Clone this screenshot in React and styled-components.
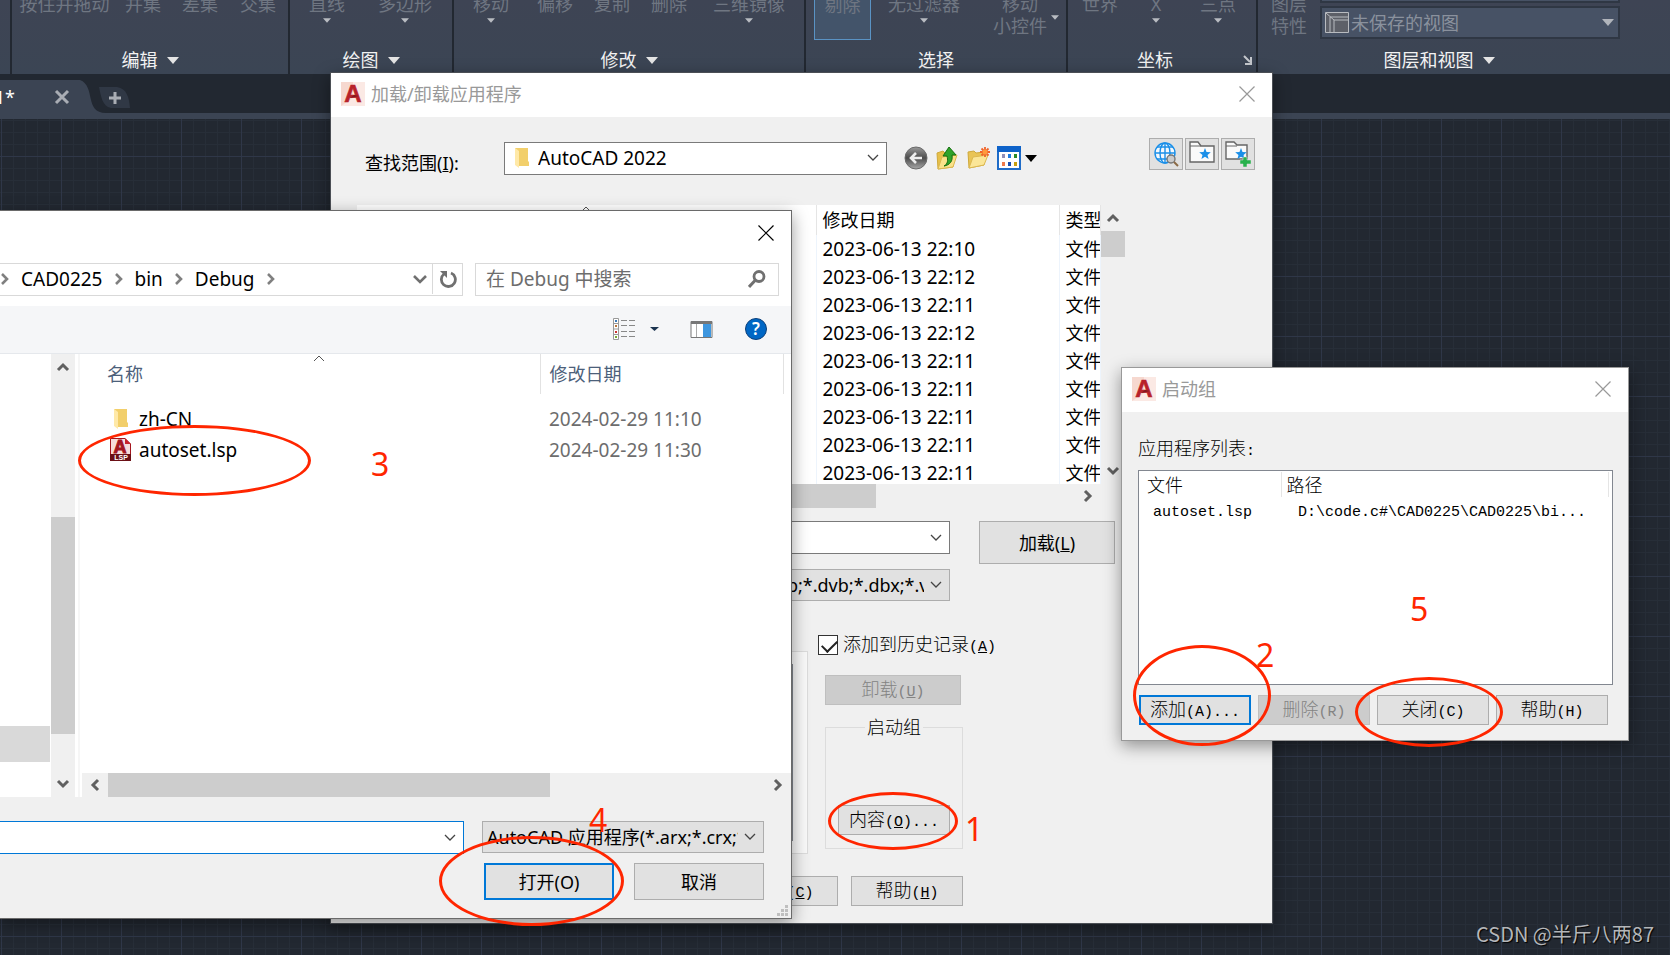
import React from 'react'
import styled, { createGlobalStyle, css } from 'styled-components'

const GlobalStyle = createGlobalStyle`
                  * {
                    box-sizing: border-box;
                  }

                  body {
                    margin: 0;
                    background: #222831;
                    overflow: hidden;
                  }

                  body, button, input, select {
                    font-family: "Noto Sans", "Noto Sans CJK SC", sans-serif;
                    font-size: 18px;
                    line-height: 24px;
                  }

                  button, select, input {
                    margin: 0;
                    padding: 0;
                    border-radius: 0;
                    color: inherit;
                  }

                  svg {
                    display: block;
                    flex: none;
                  }
                  `

const Desktop = styled.div`
                  position: relative;
                  min-height: 100vh;
                  display: flex;
                  flex-direction: column;
                  overflow: hidden;
                  `

/* ribbon */
const Ribbon = styled.header`
                  display: flex;
                  height: 74px;
                  padding-left: 10px;
                  align-items: flex-end;
                  background: linear-gradient(#3e4454, #3b4554);
                  overflow: hidden;
                  `

const Panel = styled.section`
                  flex: none;
                  width: ${p => p.$width}px;
                  height: 81px;
                  border-left: 2px solid #222831;
                  `

const Tools = styled.div`
                  display: grid;
                  grid-template-columns: ${p => p.$cols};
                  height: 54px;
                  color: #6f7682;
                  `

const Tool = styled.button`
                  display: flex;
                  flex-direction: column;
                  align-items: center;
                  height: 47px;
                  border: 0;
                  background: none;
                  line-height: 22px;
                  white-space: nowrap;

                  & svg {
                    margin-top: 3px;
                  }

                  ${p => p.$side && css`
                    flex-direction: row;
                    align-items: flex-start;
                    justify-content: flex-end;
                    gap: 4px;
                    padding-right: 8px;

                    & svg {
                      margin-top: 22px;
                    }
                  `}

                  ${p => p.$active && css`
                    width: 57px;
                    justify-self: center;
                    border: 1px solid #5a93c4;
                    background: #43546a;
                  `}
                  `

const PanelTitle = styled.div`
                  display: flex;
                  align-items: center;
                  height: 26px;
                  color: #f2f2f2;

                  & span {
                    display: flex;
                    flex: 1;
                    align-items: center;
                    justify-content: center;
                    gap: 9px;
                  }
                  `

const LayerFields = styled.div`
                  display: flex;
                  flex-direction: column;
                  gap: 3px;
                  `

const LayerBox = styled.div`
                  display: flex;
                  align-items: center;
                  gap: 2px;
                  height: ${p => p.$height}px;
                  padding: 0 4px 0 3px;
                  border: 2px solid #2f3744;
                  background: #475265;
                  color: #8a919d;

                  & select {
                    flex: 1;
                    appearance: none;
                    border: 0;
                    background: none;
                  }
                  `

/* drawing tabs */
const TabBar = styled.nav`
                  display: flex;
                  align-items: flex-end;
                  height: 45px;
                  border-bottom: 6px solid #3b4453;
                  background: #222831;
                  `

const FileTab = styled.div`
                  display: flex;
                  align-items: center;
                  width: 80px;
                  height: 33px;
                  background: #3b4453;
                  color: #fff;

                  & span {
                    display: flex;
                    justify-content: flex-end;
                    width: 15px;
                    margin-right: 39px;
                  }
                  `

const PlainButton = styled.button`
                  display: flex;
                  align-items: center;
                  justify-content: center;
                  border: 0;
                  background: none;
                  `

const Canvas = styled.main`
                  flex: 1;
                  background-color: #222831;
                  background-image:
                    linear-gradient(90deg, #2f3748 1px, transparent 1px),
                    linear-gradient(#2f3748 1px, transparent 1px),
                    linear-gradient(90deg, #272e38 1px, transparent 1px),
                    linear-gradient(#272e38 1px, transparent 1px);
                  background-size: 60px 60px, 60px 60px, 12px 12px, 12px 12px;
                  background-position: 1px 37px;
                  `

/* windows */
const Win = styled.section`
                  position: absolute;
                  left: ${p => p.$left}px;
                  top: ${p => p.$top}px;
                  width: ${p => p.$width}px;
                  display: flex;
                  flex-direction: column;
                  border: 1px solid ${p => p.$edge};
                  background: #f0f0f0;
                  color: #000;
                  box-shadow: 0 5px 16px rgba(0, 0, 0, .4);
                  `

const TitleBar = styled.div`
                  display: flex;
                  align-items: center;
                  gap: 6px;
                  height: 44px;
                  padding: 0 17px 2px 10px;
                  background: #fff;
                  color: #999;

                  & button {
                    margin-left: auto;
                  }
                  `

const PushButton = styled.button`
                  width: ${p => p.$width || 112}px;
                  height: ${p => p.$height || 30}px;
                  border: 1px solid #adadad;
                  background: #e1e1e1;
                  white-space: nowrap;

                  ${p => p.$primary && css`
                    border: 2px solid #0078d7;
                  `}

                  &:disabled {
                    border-color: #bfbfbf;
                    background: #ccc;
                    color: #838383;
                  }
                  `

const Song = styled.span`
                  font-family: "Noto Sans CJK SC", sans-serif;
                  font-weight: 300;
                  line-height: 20px;
                  `

const Mono = styled.span`
                  font-family: "Liberation Mono", monospace;
                  font-size: 15px;
                  line-height: 20px;
                  `

const Combo = styled.div`
                  display: flex;
                  align-items: center;
                  gap: 6px;
                  width: ${p => p.$width}px;
                  height: ${p => p.$height || 33}px;
                  padding: 0 7px 0 ${p => p.$pad || 4}px;
                  border: 1px solid ${p => p.$edge || '#7a7a7a'};
                  background: ${p => p.$grey ? '#e1e1e1' : '#fff'};

                  & select, & input {
                    flex: 1;
                    min-width: 0;
                    height: 100%;
                    appearance: none;
                    border: 0;
                    outline: 0;
                    background: none;
                    font-size: ${p => p.$grey ? 18 : 19}px;
                  }
                  `

/* scroll bars */
const Bar = styled.div`
                  display: flex;
                  flex: none;
                  flex-direction: ${p => p.$row ? 'row' : 'column'};
                  ${p => p.$row ? 'height: 24px;' : 'width: 24px;'}
                  background: #f0f0f0;

                  & button {
                    flex: 0 0 26px;
                  }

                  & div {
                    flex: 1;
                  }
                  `

const Thumb = styled.i`
                  flex: none;
                  background: #cdcdcd;
                  ${p => p.$row
                    ? css`width: ${p.$size}px; margin-left: ${p.$start}px;`
                    : css`height: ${p.$size}px; margin-top: ${p.$start}px;`}
                  `

/* load dialog */
const LookRow = styled.div`
                  display: flex;
                  align-items: center;
                  height: 40px;
                  margin: 21px 17px 27px 34px;

                  & label {
                    align-self: flex-end;
                    width: 139px;
                    line-height: 30px;
                  }
                  `

const IconRow = styled.div`
                  display: flex;
                  align-items: center;
                  gap: 7px;
                  margin-left: 17px;

                  & svg:last-child {
                    margin-left: -3px;
                  }
                  `

const SquareButtons = styled.div`
                  display: flex;
                  align-self: flex-start;
                  gap: 2px;
                  margin-left: auto;

                  & button {
                    display: flex;
                    align-items: center;
                    justify-content: center;
                    width: 34px;
                    height: 32px;
                    border: 1px solid #adadad;
                    background: #e1e1e1;
                  }
                  `

const ListArea = styled.div`
                  display: grid;
                  grid-template-columns: 744px 24px;
                  margin-left: 26px;
                  `

const ListView = styled.div`
                  height: 279px;
                  background: #fff;
                  overflow: hidden;
                  `

const FileTable = styled.table`
                  width: 100%;
                  table-layout: fixed;
                  border-collapse: collapse;

                  & th, & td {
                    height: 28px;
                    padding: 0 0 0 6px;
                    border-right: 1px solid #edf4fc;
                    text-align: left;
                    font-weight: 400;
                    white-space: nowrap;
                    overflow: hidden;
                  }

                  & td {
                    font-size: 19px;
                  }

                  & th {
                    position: relative;
                    height: 30px;
                    border-color: #e5e5e5;
                  }

                  & td:last-child {
                    font-size: 18px;
                  }
                  `

const SortMark = styled.svg`
                  position: absolute;
                  top: 1px;
                  left: 50%;
                  margin-left: -6px;
                  `

const LoadForm = styled.div`
                  display: grid;
                  grid-template-columns: 446px 136px;
                  column-gap: 29px;
                  margin: 13px 0 34px 173px;

                  & > div {
                    display: flex;
                    flex-direction: column;
                    gap: 15px;
                  }
                  `

const Lower = styled.div`
                  display: flex;
                  gap: 10px;
                  margin-left: 26px;
                  `

const HistoryTab = styled.div`
                  width: 451px;
                  height: 203px;
                  margin-top: 16px;
                  padding: 12px 14px;
                  border: 1px solid #dcdcdc;
                  background: #f9f9f9;

                  & div {
                    height: 100%;
                    border: 1px solid #828790;
                    background: #fff;
                  }
                  `

const SideColumn = styled.div`
                  display: flex;
                  flex-direction: column;
                  align-items: flex-start;
                  padding-left: 7px;

                  & label {
                    display: flex;
                    align-items: center;
                    gap: 5px;
                    height: 20px;
                    margin: 0 0 20px -7px;
                  }
                  `

const Check = styled.input`
                  appearance: none;
                  width: 20px;
                  height: 20px;
                  border: 1px solid #333;
                  background: #fff;

                  &:checked::after {
                    content: '';
                    display: block;
                    width: 13px;
                    height: 7px;
                    margin: 4px 0 0 3px;
                    border: solid #222;
                    border-width: 0 0 2px 2px;
                    transform: rotate(-45deg);
                  }
                  `

const Group = styled.fieldset`
                  width: 137px;
                  height: 135px;
                  margin: 9px 0 0;
                  padding: 65px 12px 0;
                  border: 1px solid #dcdcdc;

                  & legend {
                    margin: 0 auto;
                    padding: 0 2px;
                    line-height: 26px;
                  }
                  `

const DialogButtons = styled.div`
                  display: flex;
                  gap: 13px;
                  margin: 22px 0 17px 395px;
                  `

/* open dialog */
const OpenTop = styled.div`
                  display: flex;
                  align-items: center;
                  justify-content: flex-end;
                  height: 52px;
                  padding: 0 17px 9px 0;
                  background: #fff;
                  `

const AddressRow = styled.div`
                  display: flex;
                  gap: 12px;
                  padding: 0 12px 10px 0;
                  background: #fff;
                  font-size: 19px;
                  `

const Address = styled.nav`
                  display: flex;
                  align-items: center;
                  gap: 12px;
                  flex: 1;
                  height: 33px;
                  padding: 0 0 1px 1px;
                  border: 1px solid #d9d9d9;
                  border-left: 0;

                  & a {
                    color: #000;
                    text-decoration: none;
                  }

                  & button {
                    align-self: stretch;
                    width: 30px;
                    border-left: 1px solid #d9d9d9;
                  }

                  & button:nth-last-child(2) {
                    border: 0;
                    margin: 0 -15px 0 auto;
                  }
                  `

const Search = styled.label`
                  display: flex;
                  align-items: center;
                  width: 304px;
                  height: 33px;
                  padding: 0 12px 1px 10px;
                  border: 1px solid #d9d9d9;

                  & input {
                    flex: 1;
                    min-width: 0;
                    border: 0;
                    outline: 0;
                    font-size: 19px;
                  }

                  & input::placeholder {
                    color: #6d6d6d;
                    opacity: 1;
                  }
                  `

const OpenToolbar = styled.div`
                  display: flex;
                  align-items: center;
                  justify-content: flex-end;
                  height: 48px;
                  padding: 0 24px 2px 0;
                  border-bottom: 1px solid #e5e8ec;
                  background: #f5f6f8;
                  `

const OpenBody = styled.div`
                  display: flex;
                  height: 443px;
                  background: #fff;
                  `

const NavPane = styled.div`
                  display: flex;
                  flex-direction: column;
                  justify-content: flex-end;
                  width: 51px;
                  padding: 0 1px 35px 0;

                  & i {
                    height: 36px;
                    background: #d9d9d9;
                  }
                  `

const Split = styled.div`
                  width: 7px;
                  border: solid #fff;
                  border-width: 0 2px 0 3px;
                  background: #f6f6f6;
                  `

const OpenList = styled.div`
                  flex: 1;
                  display: flex;
                  flex-direction: column;
                  justify-content: space-between;
                  `

const OpenTable = styled.table`
                  table-layout: fixed;
                  width: 685px;
                  margin-left: 16px;
                  border-collapse: collapse;

                  & th {
                    position: relative;
                    height: 40px;
                    padding: 0 0 0 9px;
                    border-right: 1px solid #e2e2e2;
                    color: #4c607a;
                    font-weight: 400;
                    text-align: left;
                  }

                  & tbody::before {
                    content: '';
                    display: block;
                    height: 9px;
                  }

                  & td {
                    height: 31px;
                    padding: 0 0 0 9px;
                    color: #6d6d6d;
                    font-size: 19px;
                  }

                  & td:first-child {
                    padding-left: 12px;
                    color: #000;
                  }
                  `

const FileName = styled.div`
                  display: flex;
                  align-items: center;
                  gap: 8px;
                  `

const OpenFooter = styled.div`
                  display: grid;
                  grid-template-columns: 465px 282px;
                  gap: 9px 18px;
                  margin-left: -1px;
                  padding: 24px 0 18px;
                  `

const FooterButtons = styled.div`
                  grid-column: 2;
                  display: flex;
                  justify-content: flex-end;
                  gap: 20px;
                  `

const Grip = styled.svg`
                  position: absolute;
                  right: 3px;
                  bottom: 2px;
                  `

/* startup dialog */
const StartupBody = styled.div`
                  display: flex;
                  flex-direction: column;
                  padding: 25px 15px 15px 16px;
                  line-height: 20px;
                  `

const AppList = styled.div`
                  height: 215px;
                  margin-top: 8px;
                  padding: 1px 3px;
                  border: 1px solid #828790;
                  background: #fff;

                  & table {
                    width: 100%;
                    table-layout: fixed;
                    border-collapse: collapse;
                  }

                  & th {
                    height: 25px;
                    padding: 0 0 0 5px;
                    border-right: 1px solid #e5e5e5;
                    text-align: left;
                    font-weight: 300;
                  }

                  & td {
                    height: 27px;
                    padding: 0 0 0 11px;
                    white-space: nowrap;
                  }

                  & td + td {
                    padding-left: 17px;
                  }
                  `

const StartupButtons = styled.div`
                  display: flex;
                  justify-content: space-between;
                  margin-top: 10px;
                  padding: 0 5px 0 1px;
                  `

/* red notes */
const Ring = styled.div`
                  position: absolute;
                  left: ${p => p.$x}px;
                  top: ${p => p.$y}px;
                  width: ${p => p.$w}px;
                  height: ${p => p.$h}px;
                  border: 3px solid #ff2600;
                  border-radius: 50%;
                  pointer-events: none;
                  `

const Digit = styled.div`
                  position: absolute;
                  left: ${p => p.$x}px;
                  top: ${p => p.$y}px;
                  color: #ff2600;
                  font-size: 32px;
                  line-height: 38px;
                  `

const Watermark = styled.div`
                  position: absolute;
                  right: 16px;
                  bottom: 8px;
                  color: #b4b6b9;
                  font-family: "Noto Sans CJK SC", sans-serif;
                  font-size: 20px;
                  line-height: 26px;
                  text-shadow: 1px 1px 1px #000;
                  `

const Down = ({ size = 8, color = '#b9bcc2' }) => (
  <svg width={size} height={size / 2 + 1} viewBox="0 0 12 7"><path d="M0 0h12L6 7z" fill={color} /></svg>
)

const turns = { up: 0, right: 90, down: 180, left: 270 }

const Arrow = ({ dir }) => (
  <svg width="14" height="14" viewBox="0 0 14 14">
    <path d="M2 10l5-5 5 5" fill="none" stroke="#606060" strokeWidth="3" transform={`rotate(${turns[dir]} 7 7)`} />
  </svg>
)

const Chevron = () => (
  <svg width="12" height="8" viewBox="0 0 12 8"><path d="M1 1l5 5 5-5" fill="none" stroke="#444" strokeWidth="1.3" /></svg>
)

const Crumb = () => (
  <svg width="8" height="12" viewBox="0 0 8 12"><path d="M1 1l5 5-5 5" fill="none" stroke="#808080" strokeWidth="2.6" /></svg>
)

const Cross = ({ color = '#999' }) => (
  <svg width="16" height="16" viewBox="0 0 16 16"><path d="M.5.5l15 15M15.5.5l-15 15" stroke={color} strokeWidth="1.2" /></svg>
)

const AcadLogo = () => (
  <svg width="24" height="24" viewBox="0 0 24 24">
    <rect width="24" height="24" fill="#fbe9e4" />
    <path d="M0 0h12v16L0 24z" fill="#f6d8cf" />
    <text x="12" y="20" textAnchor="middle" fontFamily="Liberation Sans" fontWeight="700" fontSize="24" fill="#b8222a" stroke="#b8222a" strokeWidth=".6">A</text>
    <path d="M5 19l8-6 5 1-9 2z" fill="#7f1a1f" />
  </svg>
)

const Folder = () => (
  <svg width="21" height="22" viewBox="0 0 21 22">
    <path d="M4 1h13v13l1 1v4H8z" fill="#f2cf6b" />
    <path d="M4 1l4 3v17l-4-3z" fill="#ffe9a8" />
  </svg>
)

const LspIcon = () => (
  <svg width="21" height="23" viewBox="0 0 21 23">
    <path d="M.5.5H15l5.500 5.500V22.500H.5z" fill="#f6dcda" stroke="#a3161f" />
    <path d="M15 0v6h6z" fill="#c8222c" />
    <text x="10" y="15" textAnchor="middle" fontFamily="Liberation Sans" fontWeight="700" fontSize="18" fill="#a3161f" stroke="#a3161f">A</text>
    <path d="M0 16h21v7H0z" fill="#6b1016" />
    <text x="11" y="22" textAnchor="middle" fontFamily="Liberation Sans" fontWeight="700" fontSize="7" fill="#fff">LSP</text>
  </svg>
)

const BackIcon = () => (
  <svg width="24" height="24" viewBox="0 0 24 24">
    <defs>
      <linearGradient id="ball" x1="0" y1="0" x2="0" y2="1">
        <stop offset="0" stopColor="#9a9a9a" /><stop offset=".5" stopColor="#4c4c4c" /><stop offset="1" stopColor="#a8a8a8" />
      </linearGradient>
    </defs>
    <circle cx="12" cy="12" r="11" fill="url(#ball)" stroke="#6a6a6a" />
    <path d="M18 12H7M12 7l-5 5 5 5" fill="none" stroke="#eee" strokeWidth="2.600" />
  </svg>
)

const UpIcon = () => (
  <svg width="24" height="24" viewBox="0 0 24 24">
    <path d="M2 7l6-2 2 2 8-1v15L3 23z" fill="#e7c04a" stroke="#cfa93c" />
    <path d="M3 23l4-12 15-2-4 12z" fill="#fae28a" stroke="#dcb850" />
    <path d="M9 20c4-2 4-6 3-10H8l6-9 7 8h-4c1 6-2 10-8 11z" fill="#2fa32b" stroke="#16700f" />
  </svg>
)

const NewFolderIcon = () => (
  <svg width="24" height="24" viewBox="0 0 24 24">
    <path d="M2 6l6-1 2 2 8-1v13L3 22z" fill="#e9c455" stroke="#cfa93c" />
    <path d="M3 22l4-11 15-2-4 10z" fill="#fbe697" stroke="#dcb850" />
    <path d="M19 1v10M14 6h10M15.500 2.500l7 7M22.500 2.500l-7 7" stroke="#f0622a" strokeWidth="1.800" />
    <circle cx="19" cy="6" r="2.500" fill="#ff9a3c" />
  </svg>
)

const ViewsIcon = () => (
  <svg width="24" height="24" viewBox="0 0 24 24">
    <rect x="1" y="1" width="22" height="22" fill="#fff" stroke="#1f6cc8" strokeWidth="2" />
    <path d="M0 0h24v6H0z" fill="#0d62c9" />
    <path d="M5 8h3v4H5z" fill="#8f8fb8" /><path d="M11 8h3v4h-3z" fill="#1f7be0" /><path d="M17 8h3v4h-3z" fill="#2a8a2a" />
    <path d="M5 16h3v4H5z" fill="#ee7a4a" /><path d="M11 16h3v4h-3z" fill="#1a4fb0" /><path d="M17 16h3v4h-3z" fill="#c8a010" />
  </svg>
)

const GlobeIcon = () => (
  <svg width="25" height="25" viewBox="0 0 25 25" fill="none" stroke="#1a8fe8" strokeWidth="1.400">
    <circle cx="11" cy="11" r="10" fill="#f4f8fc" /><ellipse cx="11" cy="11" rx="5" ry="10" />
    <path d="M11 1v20M1 11h20M3 5h16M3 17h16" />
    <circle cx="17" cy="17" r="4" fill="#ccc" stroke="#777" /><path d="M20 20l4 4" stroke="#8b6a45" strokeWidth="2" />
  </svg>
)

const StarFolder = ({ plus }) => (
  <svg width="26" height="26" viewBox="0 0 26 26">
    <path d={plus ? 'M1 5V1h8l3 3h10v14H1z' : 'M1 5V1h8l3 4h13v16H1z'} fill="#fafafa" stroke="#666" strokeWidth="1.400" />
    <path d="M1 5h11" stroke="#666" />
    <path d="M16 7l1.500 4 4.300.2-3.300 2.700 1.100 4.200L16 15.700l-3.600 2.400 1.100-4.200-3.300-2.700 4.300-.2z" fill="#1a8fe8" />
    {plus && <path d="M18 16h4v3h4v4h-4v3h-4v-3h-3v-4h3z" fill="#28b14c" stroke="#e1e1e1" strokeWidth=".5" />}
  </svg>
)

const ScrollBar = ({ row, start, size }) => (
  <Bar $row={row}>
    <PlainButton aria-label="-"><Arrow dir={row ? 'left' : 'up'} /></PlainButton>
    <Thumb $row={row} $start={start} $size={size} />
    <div />
    <PlainButton aria-label="+"><Arrow dir={row ? 'right' : 'down'} /></PlainButton>
  </Bar>
)

const panels = [
  { title: '编辑', width: 278, more: true, cols: '105px 52px 62px 54px', tools: [['按住并拖动'], ['并集'], ['差集'], ['交集']] },
  { title: '绘图', width: 164, more: true, cols: '74px 82px', tools: [['直线', 1], ['多边形', 1]] },
  { title: '修改', width: 352, more: true, cols: '74px 54px 60px 54px 106px', tools: [['移动', 1], ['偏移'], ['复制'], ['删除'], ['三维镜像', 1]] },
]

const dates = ['22:10', '22:12', '22:11', '22:12', '22:11', '22:11', '22:11', '22:11', '22:11']

const RibbonBar = () => (
  <Ribbon>
    {panels.map(p => (
      <Panel key={p.title} $width={p.width}>
        <Tools $cols={p.cols}>
          {p.tools.map(([name, menu]) => <Tool key={name}>{name}{menu && <Down />}</Tool>)}
        </Tools>
        <PanelTitle><span>{p.title}<Down size={12} color="#e4e4e4" /></span></PanelTitle>
      </Panel>
    ))}
    <Panel $width={262}>
      <Tools $cols="73px 90px 98px">
        <Tool $active>剔除</Tool>
        <Tool>无过滤器<Down /></Tool>
        <Tool $side><span>移动<br />小控件</span><Down /></Tool>
      </Tools>
      <PanelTitle><span>选择</span></PanelTitle>
    </Panel>
    <Panel $width={190}>
      <Tools $cols="64px 48px 76px">
        <Tool>世界</Tool>
        <Tool>X<Down /></Tool>
        <Tool>三点<Down /></Tool>
      </Tools>
      <PanelTitle>
        <span>坐标</span>
        <svg width="14" height="10" viewBox="0 0 14 10"><path d="M2 1l6 6M9 2v7H3" fill="none" stroke="#c4c7cc" strokeWidth="2" /></svg>
      </PanelTitle>
    </Panel>
    <Panel $width={364}>
      <Tools $cols="62px 300px">
        <Tool><span>图层<br />特性</span></Tool>
        <LayerFields>
          <LayerBox $height={10} />
          <LayerBox $height={33}>
            <svg width="24" height="21" viewBox="0 0 24 21">
              <path d="M.5.5h23v20H.5z" fill="#5d6068" stroke="#b8bbc0" />
              <path d="M1 1l8 7h15M9 8v13M5 5h19M5 5v16" fill="none" stroke="#b8bbc0" />
            </svg>
            <select aria-label="视图"><option>未保存的视图</option></select>
            <Down size={12} color="#b0b4bb" />
          </LayerBox>
        </LayerFields>
      </Tools>
      <PanelTitle><span>图层和视图<Down size={12} color="#e4e4e4" /></span></PanelTitle>
    </Panel>
  </Ribbon>
)

const LoadDialog = () => (
  <Win $left={330} $top={72} $width={943} $edge="#4b4f55">
    <TitleBar>
      <AcadLogo />加载/卸载应用程序
      <PlainButton aria-label="关闭"><Cross /></PlainButton>
    </TitleBar>
    <LookRow>
      <label htmlFor="look">查找范围(<u>I</u>):</label>
      <Combo $width={383} $pad={6}>
        <Folder />
        <select id="look"><option>AutoCAD 2022</option></select>
        <Chevron />
      </Combo>
      <IconRow>
        <BackIcon /><UpIcon /><NewFolderIcon /><ViewsIcon />
        <Down size={12} color="#000" />
      </IconRow>
      <SquareButtons>
        <button aria-label="搜索"><GlobeIcon /></button>
        <button aria-label="收藏"><StarFolder /></button>
        <button aria-label="添加"><StarFolder plus /></button>
      </SquareButtons>
    </LookRow>
    <ListArea>
      <ListView>
        <FileTable>
          <colgroup><col width="459" /><col width="243" /><col /></colgroup>
          <thead>
            <tr>
              <th><SortMark width="12" height="6" viewBox="0 0 12 6"><path d="M1 6l5-5 5 5" fill="none" stroke="#555" /></SortMark></th>
              <th>修改日期</th>
              <th>类型</th>
            </tr>
          </thead>
          <tbody>
            {dates.map((d, i) => <tr key={i}><td /><td>2023-06-13 {d}</td><td>文件</td></tr>)}
          </tbody>
        </FileTable>
      </ListView>
      <ScrollBar start={0} size={26} />
      <ScrollBar row start={0} size={493} />
    </ListArea>
    <LoadForm>
      <div>
        <Combo $width={446}><input aria-label="文件名" /><Chevron /></Combo>
        <Combo $width={446} $height={32} $edge="#adadad" $grey>
          <select aria-label="文件类型"><option>AutoCAD 应用程序(*.arx;*.crx;*.lsp;*.dvb;*.dbx;*.v</option></select>
          <Chevron />
        </Combo>
      </div>
      <PushButton $width={136} $height={43}>加载(<u>L</u>)</PushButton>
    </LoadForm>
    <Lower>
      <HistoryTab><div /></HistoryTab>
      <SideColumn>
        <label><Check type="checkbox" defaultChecked /><Song>添加到历史记录<Mono>(<u>A</u>)</Mono></Song></label>
        <PushButton $width={136} disabled><Song>卸载<Mono>(<u>U</u>)</Mono></Song></PushButton>
        <Group>
          <legend><Song>启动组</Song></legend>
          <PushButton><Song>内容<Mono>(<u>O</u>)...</Mono></Song></PushButton>
        </Group>
      </SideColumn>
    </Lower>
    <DialogButtons>
      <PushButton><Song>关闭<Mono>(<u>C</u>)</Mono></Song></PushButton>
      <PushButton><Song>帮助<Mono>(<u>H</u>)</Mono></Song></PushButton>
    </DialogButtons>
  </Win>
)

const OpenDialog = () => (
  <Win $left={-1} $top={210} $width={793} $edge="#6a6a6a">
    <OpenTop><PlainButton aria-label="关闭"><Cross color="#000" /></PlainButton></OpenTop>
    <AddressRow>
      <Address>
        <Crumb /><a href="#cad">CAD0225</a>
        <Crumb /><a href="#bin">bin</a>
        <Crumb /><a href="#debug">Debug</a>
        <Crumb />
        <PlainButton aria-label="历史">
          <svg width="14" height="10" viewBox="0 0 14 10"><path d="M1 2l6 6 6-6" fill="none" stroke="#707070" strokeWidth="2.600" /></svg>
        </PlainButton>
        <PlainButton aria-label="刷新">
          <svg width="18" height="18" viewBox="0 0 18 18">
            <path d="M12 3a7 7 0 1 1-7 1" fill="none" stroke="#707070" strokeWidth="2.800" />
            <path d="M1 1h7v7z" fill="#707070" />
          </svg>
        </PlainButton>
      </Address>
      <Search>
        <input placeholder="在 Debug 中搜索" />
        <svg width="18" height="18" viewBox="0 0 18 18" fill="none" stroke="#707070">
          <circle cx="11" cy="6.500" r="5" strokeWidth="2.800" /><path d="M7.500 10L1 17" strokeWidth="3" />
        </svg>
      </Search>
    </AddressRow>
    <OpenToolbar>
      <svg width="154" height="22" viewBox="0 0 154 22">
        <path d="M.5.5h5v21h-5zM0 5.500h6M0 11h6M0 16.500h6" fill="#fff" stroke="#999" />
        <path d="M2 2h2v2H2z" fill="#3b7ab8" /><path d="M2 7h2v2H2z" fill="#b8763b" /><path d="M2 13h2v2H2z" fill="#c33" /><path d="M2 18h2v2H2z" fill="#7a3" />
        <path d="M8 2.500h6m2 0h6M8 7.500h6m2 0h6M8 13.500h6m2 0h6M8 18.500h6m2 0h6" stroke="#888" />
        <path d="M37 9h9l-4.500 4z" fill="#1b3450" />
        <path d="M78 3.500h21v16H78z" fill="#fff" stroke="#777" />
        <path d="M78 4h21v2H78z" fill="#777" /><path d="M83.500 6v13" stroke="#aaa" /><path d="M90 6h8v13h-8z" fill="#3f97df" />
        <circle cx="143" cy="11" r="10.500" fill="#0067c5" stroke="#0b3f7a" />
        <text x="143" y="17" textAnchor="middle" fontFamily="Noto Sans" fontWeight="600" fontSize="17" fill="#fff">?</text>
      </svg>
    </OpenToolbar>
    <OpenBody>
      <NavPane><i /></NavPane>
      <ScrollBar start={137} size={217} />
      <Split />
      <OpenList>
        <OpenTable>
          <colgroup><col width="442" /><col width="243" /></colgroup>
          <thead>
            <tr>
              <th>名称<SortMark width="12" height="7" viewBox="0 0 12 7"><path d="M1 6l5-5 5 5" fill="none" stroke="#555" /></SortMark></th>
              <th>修改日期</th>
            </tr>
          </thead>
          <tbody>
            <tr><td><FileName><Folder />zh-CN</FileName></td><td>2024-02-29 11:10</td></tr>
            <tr><td><FileName><LspIcon />autoset.lsp</FileName></td><td>2024-02-29 11:30</td></tr>
          </tbody>
        </OpenTable>
        <ScrollBar row start={0} size={442} />
      </OpenList>
    </OpenBody>
    <OpenFooter>
      <Combo $width={465} $edge="#0078d7"><input aria-label="文件名" /><Chevron /></Combo>
      <Combo $width={282} $height={32} $edge="#adadad" $grey>
        <select aria-label="文件类型"><option>AutoCAD 应用程序(*.arx;*.crx;*.lsp)</option></select>
        <Chevron />
      </Combo>
      <FooterButtons>
        <PushButton $width={130} $height={37} $primary>打开(O)</PushButton>
        <PushButton $width={130} $height={37}>取消</PushButton>
      </FooterButtons>
    </OpenFooter>
    <Grip width="12" height="12" viewBox="0 0 12 12">
      <path d="M9 1h3v3H9zM5 5h3v3H5zM9 5h3v3H9zM1 9h3v3H1zM5 9h3v3H5zM9 9h3v3H9z" fill="#bfbfbf" />
    </Grip>
  </Win>
)

const StartupDialog = () => (
  <Win $left={1121} $top={367} $width={508} $edge="#999">
    <TitleBar>
      <AcadLogo />启动组
      <PlainButton aria-label="关闭"><Cross /></PlainButton>
    </TitleBar>
    <StartupBody>
      <Song>应用程序列表<Mono>:</Mono></Song>
      <AppList>
        <table>
          <colgroup><col width="139" /><col /></colgroup>
          <thead><tr><th><Song>文件</Song></th><th><Song>路径</Song></th></tr></thead>
          <tbody><tr><td><Mono>autoset.lsp</Mono></td><td><Mono>D:\code.c#\CAD0225\CAD0225\bi...</Mono></td></tr></tbody>
        </table>
      </AppList>
      <StartupButtons>
        <PushButton $primary><Song>添加<Mono>(A)...</Mono></Song></PushButton>
        <PushButton disabled><Song>删除<Mono>(R)</Mono></Song></PushButton>
        <PushButton><Song>关闭<Mono>(C)</Mono></Song></PushButton>
        <PushButton><Song>帮助<Mono>(H)</Mono></Song></PushButton>
      </StartupButtons>
    </StartupBody>
  </Win>
)

const App = () => {
    return (
      <Desktop>
        <GlobalStyle />
        <RibbonBar />
        <TabBar>
          <FileTab>
            <span>1*</span>
            <PlainButton aria-label="关闭">
              <svg width="16" height="16" viewBox="0 0 16 16"><path d="M2 2l12 12M14 2L2 14" stroke="#a9adb4" strokeWidth="3" /></svg>
            </PlainButton>
          </FileTab>
          <svg width="60" height="33" viewBox="0 0 60 33">
            <path d="M0 0c16 6 4 33 26 33H0z" fill="#3b4453" />
            <path d="M19 7h18c10 2 12 10 13 21H31c-9-2-10-12-12-21z" fill="#303845" />
            <path d="M35 12v12M29 18h12" stroke="#a9adb4" strokeWidth="3" />
          </svg>
        </TabBar>
        <Canvas />
        <LoadDialog />
        <OpenDialog />
        <StartupDialog />
        <Ring $x={828} $y={792} $w={130} $h={58} />
        <Digit $x={965} $y={810}>1</Digit>
        <Ring $x={1133} $y={645} $w={138} $h={101} />
        <Digit $x={1256} $y={636}>2</Digit>
        <Ring $x={78} $y={425} $w={233} $h={71} />
        <Digit $x={371} $y={445}>3</Digit>
        <Ring $x={439} $y={836} $w={185} $h={90} />
        <Digit $x={589} $y={801}>4</Digit>
        <Ring $x={1355} $y={677} $w={148} $h={70} />
        <Digit $x={1410} $y={590}>5</Digit>
        <Watermark>CSDN @半斤八两87</Watermark>
      </Desktop>
    )
  }

export default App
